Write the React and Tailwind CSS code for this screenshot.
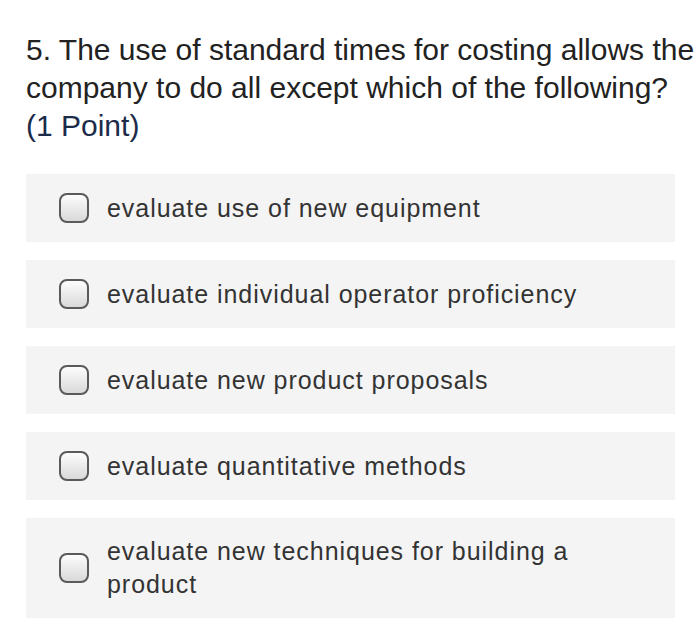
import React from 'react';

const options = [
    ['evaluate use of new equipment'],
    ['evaluate individual operator proficiency'],
    ['evaluate new product proposals'],
    ['evaluate quantitative methods'],
    ['evaluate new techniques for building a', 'product'],
];

const Checkbox = () => (
    <span className="shrink-0 w-[30px] h-[30px] rounded-[8px] border-2 border-[#5a5a5a] bg-gradient-to-b from-[#fdfdfd] to-[#d9d9d9]" />
);

export default function App() {
    return (
        <div className="min-h-screen bg-white pl-[26px] pr-[25px] pt-[31px] font-['Liberation_Sans',Arial,sans-serif]">
            <div className="text-[30px] leading-[38px] text-[#222] whitespace-nowrap">
                5. The use of standard times for costing allows the
                <br />
                company to do all except which of the following?
                <div className="text-[#1c2b4a]">(1 Point)</div>
            </div>

            <div className="mt-[29px] flex flex-col gap-[18px]">
                {options.map((lines, i) => (
                    <label
                        key={i}
                        className={`flex items-center bg-[#f4f4f4] pl-[33px] ${lines.length > 1 ? 'py-[17px]' : 'h-[68px]'}`}
                    >
                        <Checkbox />
                        <span className="ml-[18px] text-[25px] tracking-[0.95px] leading-[33px] text-[#333] whitespace-nowrap">
                            {lines.map((l, j) => (
                                <span key={j} className="block">{l}</span>
                            ))}
                        </span>
                    </label>
                ))}
            </div>
        </div>
    );
}
